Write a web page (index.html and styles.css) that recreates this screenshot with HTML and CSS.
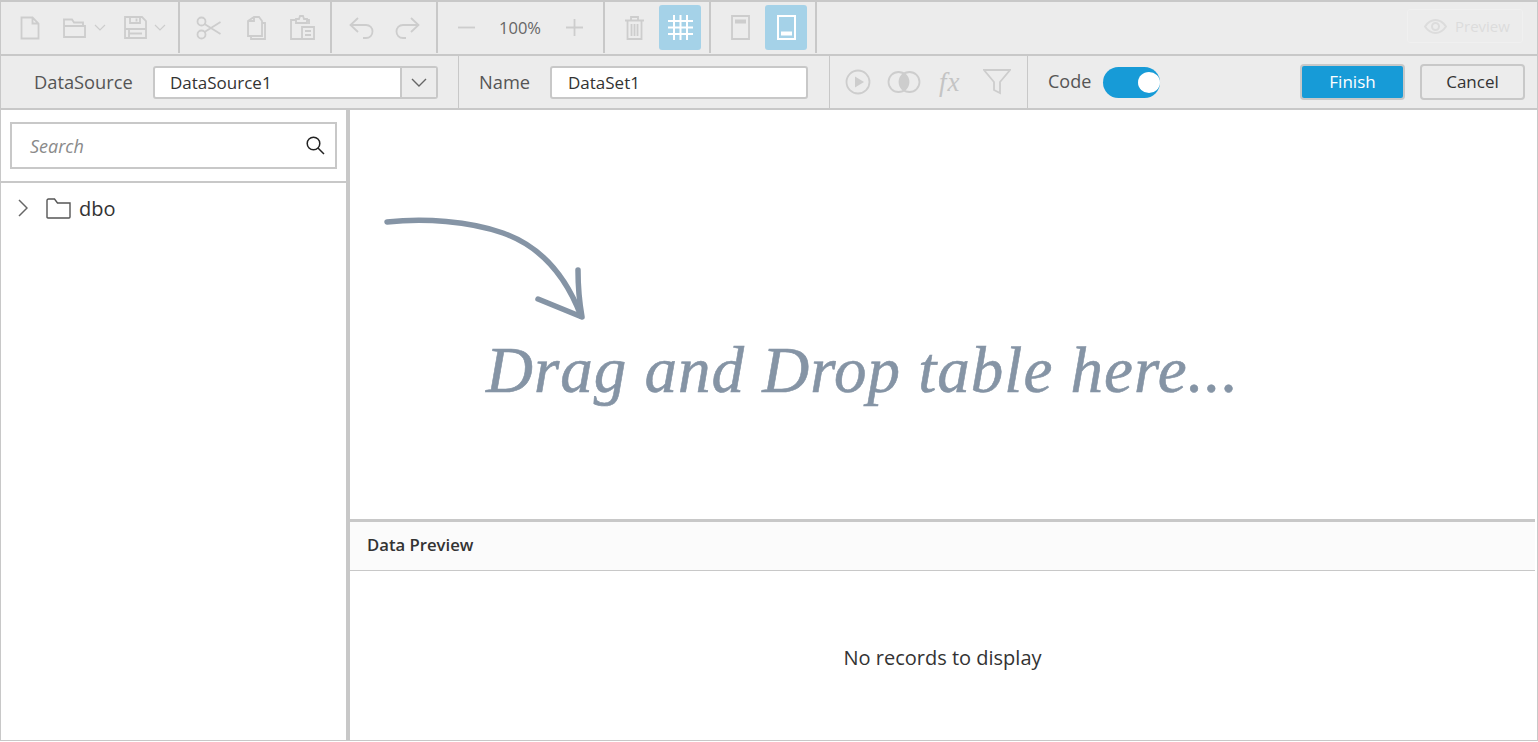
FILE: index.html
```html
<!DOCTYPE html>
<html lang="en">
<head>
<meta charset="utf-8">
<title>Query Designer</title>
<link rel="stylesheet" href="styles.css">
</head>
<body>
<div class="app">
  <div class="bar">
    <div class="group g1">
      <div class="slot s-new"><svg width="20" height="24" viewBox="0 0 20 24"><path d="M1.500 1.500h11l6 6v15h-17zM12.500 1.500v6h6"/></svg></div>
      <div class="slot s-open"><svg width="23" height="21" viewBox="0 0 23 21"><path d="M1 20V2.500h8l2 3h9v3.500M1 9h21v11H1z"/></svg><svg class="chev" width="12" height="7" viewBox="0 0 12 7"><path d="M1 1l5 5 5-5"/></svg></div>
      <div class="slot s-save"><svg width="23" height="23" viewBox="0 0 23 23"><path d="M1 1h17l4 4v17H1zM6 1v6h10V1M12.500 2.500v3M1 13h21M5 13v9M5 17.500h13"/></svg><svg class="chev" width="12" height="7" viewBox="0 0 12 7"><path d="M1 1l5 5 5-5"/></svg></div>
    </div>
    <div class="group g2">
      <div class="slot"><svg width="25" height="24" viewBox="0 0 25 24"><circle cx="5.500" cy="5.500" r="4"/><circle cx="5.500" cy="18.500" r="4"/><path d="M8.500 8l16 10M8.500 16l16-10"/></svg></div>
      <div class="slot"><svg width="21" height="24" viewBox="0 0 21 24"><path d="M9 1h5l3 4v15H3V5zM9 1v4H3M17 7h3v16H6v-3"/></svg></div>
      <div class="slot"><svg width="25" height="25" viewBox="0 0 25 25"><path d="M6 4h3l1-3h3l1 3h3v4H6zM6 5H1v19h11M17 5h2v4M12 12h12v12H12zM15 16h6M15 20h6"/></svg></div>
    </div>
    <div class="group g3">
      <div class="slot"><svg width="25" height="22" viewBox="0 0 25 22"><path d="M9 1L1.500 8 9 15M1.500 8H17c4 0 6.500 3 6.500 6.500S21 21 17 21h-3"/></svg></div>
      <div class="slot"><svg width="25" height="22" viewBox="0 0 25 22"><path d="M16 1l7.500 7-7.500 7M23.500 8H8c-4 0-6.500 3-6.500 6.500S4 21 8 21h3"/></svg></div>
    </div>
    <div class="group g4">
      <div class="slot s-zoom-out"><svg width="17" height="3" viewBox="0 0 17 3"><path d="M0 1.500h17"/></svg></div>
      <div class="zoom-value">100%</div>
      <div class="slot s-zoom-in"><svg width="17" height="17" viewBox="0 0 17 17"><path d="M0 8.500h17M8.500 0v17"/></svg></div>
    </div>
    <div class="group g5">
      <div class="slot s-btn"><svg width="19" height="24" viewBox="0 0 19 24"><path d="M0 4.500h19M6 4V1h7v3M2.500 4.500v18.500h14V4.500M6.500 8v12M9.500 8v12M12.500 8v12"/></svg></div>
      <div class="slot s-btn active"><svg class="light" width="25" height="25" viewBox="0 0 25 25"><path d="M0 6h25M0 12.500h25M0 19h25M6 0v25M12.500 0v25M19 0v25"/></svg></div>
    </div>
    <div class="group g6">
      <div class="slot s-btn"><svg width="19" height="25" viewBox="0 0 19 25"><path d="M1 1h17v23H1z"/><path class="fat" d="M4 6.500h11"/></svg></div>
      <div class="slot s-btn active"><svg class="light" width="19" height="25" viewBox="0 0 19 25"><path d="M1 1h17v23H1z"/><path class="fat" d="M4 18.500h11"/></svg></div>
    </div>
    <div class="spacer"></div>
    <div class="preview"><svg width="23" height="15" viewBox="0 0 23 15"><path d="M1 7.500C4 3 7.500 1 11.500 1S19 3 22 7.500C19 12 15.500 14 11.500 14S4 12 1 7.500z"/><circle cx="11.500" cy="7.500" r="3.500"/></svg><span>Preview</span></div>
  </div>

  <div class="bar">
    <div class="cell c-source">
      <label class="field-label l-source">DataSource</label>
      <div class="combo"><span class="combo-text">DataSource1</span><span class="combo-arrow"><svg width="16" height="9" viewBox="0 0 16 9"><path d="M1 1l7 7 7-7"/></svg></span></div>
    </div>
    <div class="cell c-name">
      <label class="field-label l-name">Name</label>
      <div class="name-input">DataSet1</div>
    </div>
    <div class="cell c-tools">
      <svg class="t-play" width="26" height="26" viewBox="0 0 26 26"><circle cx="13" cy="13" r="11.500"/><path class="solid" d="M10 7.500l9 5.500-9 5.500z"/></svg>
      <svg class="t-join" width="34" height="22" viewBox="0 0 34 22"><circle cx="11.500" cy="11" r="10"/><circle cx="22.500" cy="11" r="10"/><path class="solid" d="M17 3c3 2 4.200 5 4.200 8s-1.200 6-4.200 8c-3-2-4.200-5-4.200-8s1.200-6 4.200-8z"/></svg>
      <span class="fx">fx</span>
      <svg class="t-filter" width="28" height="26" viewBox="0 0 28 26"><path d="M1 1h26L17 13v11l-6-3v-8z"/></svg>
    </div>
    <div class="cell c-code">
      <span class="code-label">Code</span>
      <span class="toggle"><span class="knob"></span></span>
      <span class="spacer"></span>
      <button class="btn primary">Finish</button>
      <button class="btn">Cancel</button>
    </div>
  </div>

  <div class="main">
    <aside class="side">
      <div class="search-wrap">
        <div class="search"><span>Search</span><svg class="dark" width="19" height="19" viewBox="0 0 19 19"><circle cx="7.500" cy="7.500" r="6.300"/><path d="M12 12l6 6"/></svg></div>
      </div>
      <div class="tree-row">
        <svg class="tree-chev" width="10" height="18" viewBox="0 0 10 18"><path d="M1 1l8 8-8 8"/></svg>
        <svg class="tree-folder" width="25" height="21" viewBox="0 0 25 21"><path d="M1 19V2.500q0-1.500 1.500-1.500h6l3 4h12.500v14q0 1-1 1H2q-1 0-1-1z"/></svg>
        <span class="tree-label">dbo</span>
      </div>
    </aside>
    <section class="content">
      <div class="drop">
        <svg class="drop-arrow" width="205" height="112" viewBox="0 0 205 112"><path d="M3 6C40 2 85 5 119 17C153 29 180 55 197 100"/><path d="M194 54c0 15 1 30 4 47L154 83"/></svg>
        <div class="drop-text">Drag and Drop table here...</div>
      </div>
      <div class="preview-panel">
        <div class="preview-head">Data Preview</div>
        <div class="preview-body">No records to display</div>
      </div>
    </section>
  </div>
</div>
</body>
</html>
```

FILE: styles.css
```css
* { box-sizing: border-box; }
html, body { margin: 0; padding: 0; background: #fff; }
body { font-family: "Open Sans", "Noto Sans", sans-serif; overflow: hidden; }

.app {
  width: 1538px;
  height: 741px;
  display: flex;
  flex-direction: column;
  border: 1px solid #c8c8c8;
  border-top-width: 2px;
  overflow: hidden;
}

svg { display: block; fill: none; stroke: #cdcdcd; stroke-width: 1.8; flex: none; }
svg.light { stroke: #fff; stroke-width: 2; }
svg.dark { stroke: #222; stroke-width: 1.5; }
svg .fat { stroke-width: 4; }
svg .solid { fill: #cdcdcd; stroke: none; }

.bar {
  flex: none;
  height: 54px;
  display: flex;
  align-items: stretch;
  background: #ececec;
  border-bottom: 2px solid #c8c8c8;
}

.spacer { flex: 1; }

.group {
  display: flex;
  align-items: center;
  height: 51px;
  border-right: 2px solid #c8c8c8;
}
.g1 { width: 179px; padding-left: 7px; }
.g2 { width: 152px; padding-left: 5px; }
.g3 { width: 106px; padding-left: 6px; }
.g4 { width: 167px; }
.g5 { width: 106px; padding-left: 8px; gap: 4px; }
.g6 { width: 106px; padding-left: 8px; gap: 4px; }

.slot {
  width: 47px;
  height: 45px;
  display: flex;
  align-items: center;
  justify-content: center;
  flex: none;
}
.g1 .s-new { width: 43px; }
.s-open { width: 62px; gap: 8px; justify-content: flex-start; padding-left: 12px; }
.s-save { width: 60px; gap: 7px; justify-content: flex-start; padding-left: 11px; }
.g3 .slot { width: 46px; }
.s-zoom-out { width: 56px; }
.s-zoom-in { width: 57px; }
.s-btn { width: 42px; border-radius: 3px; }
.active { background: #a5d2e8; }
svg.chev { stroke-width: 1.2; }

.zoom-value { width: 52px; text-align: center; font-size: 16.500px; color: #666; white-space: nowrap; }

.preview {
  margin: 7px 14px 0 0;
  width: 116px;
  height: 34px;
  display: flex;
  align-items: center;
  gap: 8px;
  padding-left: 16px;
  border: 1px solid #f0f0f0;
  border-radius: 3px;
  font-size: 15px;
  color: #dcdcdc;
  white-space: nowrap;
}
.preview svg { stroke: #dcdcdc; stroke-width: 2; }

.cell {
  height: 52px;
  display: flex;
  align-items: center;
  border-right: 1px solid #c8c8c8;
}
.c-source { width: 458px; padding-left: 33px; }
.c-name { width: 371px; padding-left: 20px; }
.c-tools { width: 198px; padding-left: 15px; }
.c-code { flex: 1; border-right: 0; padding: 0 12px 0 20px; }

.field-label { font-size: 18.300px; color: #555; white-space: nowrap; padding-bottom: 2px; }
.l-source { width: 119px; }
.l-name { width: 71px; }

.combo {
  width: 285px;
  height: 33px;
  display: flex;
  background: #fff;
  border: 2px solid #c8c8c8;
  border-radius: 3px;
  overflow: hidden;
}
.combo-text { flex: 1; padding-left: 15px; font-size: 17px; line-height: 29px; color: #333; }
.combo-arrow {
  width: 36px;
  display: flex;
  align-items: center;
  justify-content: center;
  background: #ececec;
  border-left: 2px solid #c8c8c8;
}
.combo-arrow svg { stroke: #666; stroke-width: 1.4; }

.name-input {
  width: 258px;
  height: 33px;
  padding-left: 16px;
  background: #fff;
  border: 2px solid #c8c8c8;
  border-radius: 3px;
  font-size: 17px;
  line-height: 29px;
  color: #333;
}

.t-join { margin-left: 16px; }
.fx {
  width: 26px;
  margin-left: 18px;
  font-family: "Liberation Serif", serif;
  font-style: italic;
  font-size: 27px;
  letter-spacing: 1px;
  color: #c4c4c4;
}
.t-filter { margin-left: 18px; }

.code-label { font-size: 18px; color: #555; margin-right: 12px; padding-bottom: 2px; }
.toggle {
  position: relative;
  width: 57px;
  height: 31px;
  border-radius: 16px;
  background: #179bd7;
}
.knob {
  position: absolute;
  top: 5px;
  right: 0;
  width: 22px;
  height: 21px;
  border-radius: 50%;
  background: #fff;
}

.btn {
  width: 105px;
  height: 36px;
  margin-left: 15px;
  padding: 0 0 2px;
  border: 2px solid #c8c8c8;
  border-radius: 4px;
  background: #ececec;
  font-family: inherit;
  font-size: 17px;
  color: #333;
}
.btn.primary { margin-left: 0; background: #179bd7; color: #fff; }

.main { flex: 1; min-height: 0; display: flex; }

.side {
  flex: none;
  width: 349px;
  border-right: 4px solid #c8c8c8;
}
.search-wrap { height: 73px; padding: 12px 9px 0; border-bottom: 2px solid #c8c8c8; }
.search {
  height: 47px;
  display: flex;
  align-items: center;
  justify-content: space-between;
  padding: 0 10px 0 18px;
  border: 2px solid #c8c8c8;
  font-size: 18px;
  font-style: italic;
  color: #8a8a8a;
}
.tree-row { display: flex; align-items: center; height: 50px; padding-left: 17px; }
.tree-chev { stroke: #666; stroke-width: 1.5; }
.tree-folder { margin-left: 18px; stroke: #555; stroke-width: 1.4; }
.tree-label { margin-left: 8px; font-size: 20px; color: #333; }

.content { flex: 1; min-width: 0; display: flex; flex-direction: column; padding-right: 2px; }

.drop { flex: none; height: 409px; padding: 106px 0 0 34px; }
.drop-arrow { stroke: #8594a5; stroke-width: 5.500; stroke-linecap: round; stroke-linejoin: round; }
.drop-text {
  margin: 2px 0 0 102px;
  font-family: "Liberation Serif", serif;
  font-style: italic;
  font-size: 65px;
  line-height: 80px;
  letter-spacing: 1px;
  -webkit-text-stroke: 0.6px #8594a5;
  color: #8594a5;
  white-space: nowrap;
}

.preview-panel { flex: 1; display: flex; flex-direction: column; border-top: 3px solid #c8c8c8; }
.preview-head {
  flex: none;
  height: 49px;
  padding-left: 17px;
  background: #fbfbfb;
  border-bottom: 1px solid #c8c8c8;
  font-size: 16.700px;
  font-weight: 600;
  line-height: 46px;
  color: #333;
}
.preview-body {
  flex: 1;
  padding-top: 74px;
  text-align: center;
  font-size: 20px;
  line-height: 26px;
  color: #333;
}
```
